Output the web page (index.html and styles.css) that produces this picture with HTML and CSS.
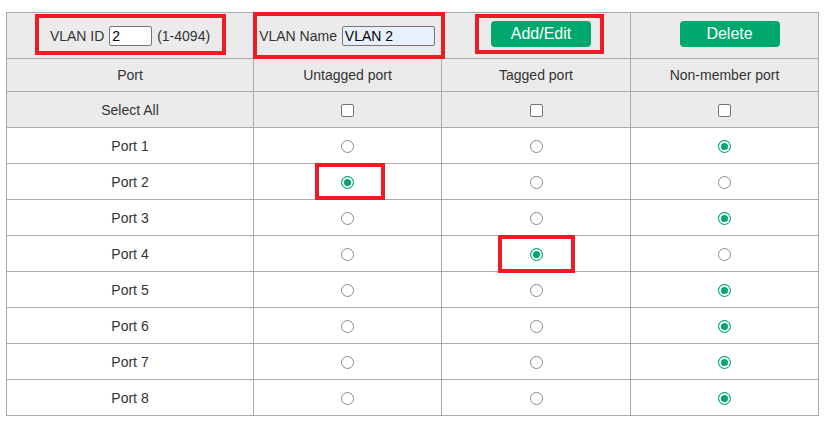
FILE: index.html
```html
<!DOCTYPE html>
<html>
<head>
<meta charset="utf-8">
<link rel="stylesheet" href="styles.css">
</head>
<body>
<div class="wrap">
  <table class="vlan">
    <colgroup>
      <col class="c1"><col class="c2"><col class="c3"><col class="c4">
    </colgroup>
    <tr class="top">
      <td><span class="lbl">VLAN ID</span> <input class="in-id" type="text" value="2"> <span class="lbl">(1-4094)</span></td>
      <td><span class="lbl">VLAN Name</span> <input class="in-name" type="text" value="VLAN 2"></td>
      <td><button class="btn">Add/Edit</button></td>
      <td><button class="btn">Delete</button></td>
    </tr>
    <tr class="head">
      <td>Port</td><td>Untagged port</td><td>Tagged port</td><td>Non-member port</td>
    </tr>
    <tr class="sel">
      <td>Select All</td>
      <td><span class="cb"></span></td>
      <td><span class="cb"></span></td>
      <td><span class="cb"></span></td>
    </tr>
    <tr><td>Port 1</td><td><span class="rd"></span></td><td><span class="rd"></span></td><td><span class="rd on"></span></td></tr>
    <tr><td>Port 2</td><td><span class="rd on"></span></td><td><span class="rd"></span></td><td><span class="rd"></span></td></tr>
    <tr><td>Port 3</td><td><span class="rd"></span></td><td><span class="rd"></span></td><td><span class="rd on"></span></td></tr>
    <tr><td>Port 4</td><td><span class="rd"></span></td><td><span class="rd on"></span></td><td><span class="rd"></span></td></tr>
    <tr><td>Port 5</td><td><span class="rd"></span></td><td><span class="rd"></span></td><td><span class="rd on"></span></td></tr>
    <tr><td>Port 6</td><td><span class="rd"></span></td><td><span class="rd"></span></td><td><span class="rd on"></span></td></tr>
    <tr><td>Port 7</td><td><span class="rd"></span></td><td><span class="rd"></span></td><td><span class="rd on"></span></td></tr>
    <tr><td>Port 8</td><td><span class="rd"></span></td><td><span class="rd"></span></td><td><span class="rd on"></span></td></tr>
  </table>
  <div class="mark m-id"></div>
  <div class="mark m-name"></div>
  <div class="mark m-add"></div>
  <div class="mark m-p2"></div>
  <div class="mark m-p4"></div>
</div>
</body>
</html>
```

FILE: styles.css
```css
html, body {
  margin: 0;
  padding: 0;
  background: #fff;
}
body {
  font-family: "Liberation Sans", Arial, sans-serif;
  font-size: 14px;
  color: #333;
}
.wrap {
  position: relative;
  padding: 12px 0 0 6px;
}
.vlan {
  border-collapse: collapse;
  table-layout: fixed;
  width: 813px;
}
.c1 { width: 247px; }
.c2 { width: 188px; }
.c3 { width: 189px; }
.c4 { width: 188px; }
.vlan td {
  border: 1px solid #ababab;
  text-align: center;
  vertical-align: middle;
  padding: 0;
  height: 35px;
}
.vlan tr.top td {
  height: 45px;
  background: #ebebeb;
}
.vlan tr.head td {
  height: 32px;
  background: #ebebeb;
}
.vlan tr.sel td {
  background: #ebebeb;
}
.lbl {
  vertical-align: middle;
}
input {
  font-family: "Liberation Sans", Arial, sans-serif;
  font-size: 14px;
  color: #000;
  height: 20px;
  box-sizing: border-box;
  border: 1px solid #767676;
  border-radius: 2px;
  padding: 0 2px;
  vertical-align: middle;
  margin: 0 1px;
}
.in-id {
  width: 43px;
  background: #fff;
}
.in-name {
  width: 93px;
  background: #e8f0fe;
}
.btn {
  display: block;
  width: 100px;
  height: 26px;
  margin: -3px 0 0 calc(50% - 45px);
  border: none;
  border-radius: 4px;
  background: #00a86d;
  color: #fff;
  font-family: "Liberation Sans", Arial, sans-serif;
  font-size: 16px;
  padding: 0;
}
.cb {
  display: inline-block;
  width: 13px;
  height: 13px;
  box-sizing: border-box;
  border: 1px solid #767676;
  border-radius: 2px;
  background: #fff;
  vertical-align: middle;
}
.rd {
  display: inline-block;
  width: 13px;
  height: 13px;
  box-sizing: border-box;
  border: 1px solid #8a8a8a;
  border-radius: 50%;
  background: #fff;
  vertical-align: middle;
}
.rd.on {
  border-color: #00a86d;
  background: #00a86d;
  box-shadow: inset 0 0 0 2px #fff;
}
.mark {
  position: absolute;
  border: 4px solid #ed1c24;
  box-sizing: border-box;
}
.m-id { left: 35px; top: 14px; width: 191px; height: 41px; }
.m-name { left: 253px; top: 12px; width: 192px; height: 47px; }
.m-add { left: 475px; top: 14px; width: 129px; height: 40px; }
.m-p2 { left: 315px; top: 163px; width: 70px; height: 37px; }
.m-p4 { left: 498px; top: 235px; width: 77px; height: 38px; }
```
